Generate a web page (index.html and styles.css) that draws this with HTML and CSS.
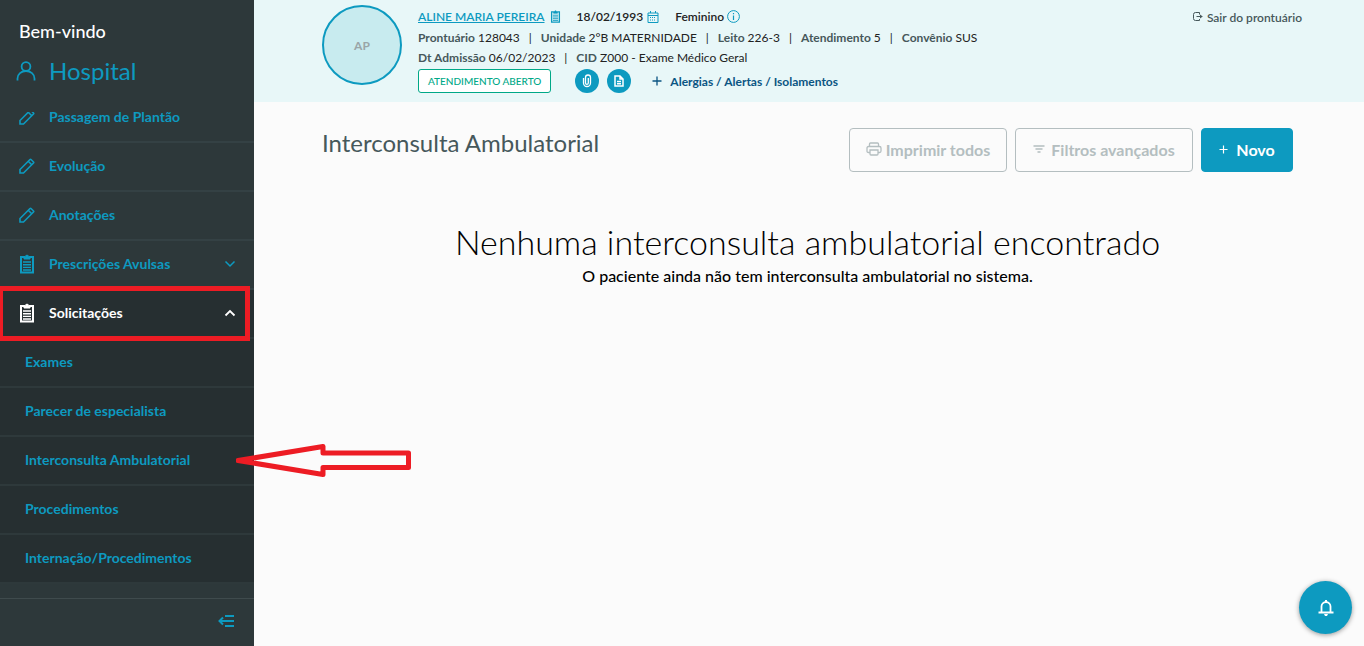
FILE: index.html
```html
<!DOCTYPE html>
<html lang="pt-BR">
<head>
    <meta charset="UTF-8">
    <meta name="viewport" content="width=device-width, initial-scale=1.0">
    <title>Interconsulta Ambulatorial</title>
    <link rel="stylesheet" href="styles.css">
</head>
<body>
    <svg class="sprite" width="0" height="0">
        <symbol id="pencil" viewBox="0 0 16 16">
            <path d="M1 15v-3.500L11 1.500q0.500-0.500 1 0L14.500 4q0.500 0.500 0 1L4.500 15zM9.500 3.500l3 3" fill="none" stroke="currentColor" stroke-width="1.600"/>
        </symbol>
        <symbol id="clipboard" viewBox="0 0 16 20">
            <path d="M5 3H2V18.500H14V3H11" fill="none" stroke="currentColor" stroke-width="2"/>
            <path d="M5 5V2.500H6.200a1.900 1.900 0 0 1 3.600 0H11V5z" fill="currentColor" stroke="currentColor"/>
            <path d="M4 8h8M4 10.700h8M4 13.400h8M4 16h8" stroke="currentColor" stroke-width="1.400"/>
        </symbol>
        <symbol id="plus" viewBox="0 0 10 10">
            <path d="M5 0.500v9M0.500 5h9" stroke="currentColor" stroke-width="1.300"/>
        </symbol>
    </svg>

    <div class="app">
        <aside class="sidebar">
            <div class="welcome">
                <p class="hello">Bem-vindo</p>
                <p class="user">
                    <svg width="20" height="20" viewBox="0 0 20 20"><path d="M1.500 19.500v-2a8.500 7.500 0 0 1 17 0v2" fill="none" stroke="currentColor" stroke-width="1.800"/><circle cx="10" cy="5.500" r="4.400" fill="none" stroke="currentColor" stroke-width="1.800"/></svg>
                    Hospital
                </p>
            </div>
            <nav class="menu">
                <ul>
                    <li><a href="#"><svg class="icon" width="16" height="16"><use href="#pencil"/></svg>Passagem de Plantão</a></li>
                    <li><a href="#"><svg class="icon" width="16" height="16"><use href="#pencil"/></svg>Evolução</a></li>
                    <li><a href="#"><svg class="icon" width="16" height="16"><use href="#pencil"/></svg>Anotações</a></li>
                    <li><a href="#"><svg class="icon" width="16" height="20"><use href="#clipboard"/></svg>Prescrições Avulsas<svg class="arrow" width="12" height="8" viewBox="0 0 12 8"><path d="M1.500 1.500L6 6L10.500 1.500" fill="none" stroke="currentColor" stroke-width="1.500"/></svg></a></li>
                    <li class="open">
                        <a href="#"><svg class="icon" width="16" height="20"><use href="#clipboard"/></svg>Solicitações<svg class="arrow" width="12" height="8" viewBox="0 0 12 8"><path d="M1.500 6.500L6 2L10.500 6.500" fill="none" stroke="currentColor" stroke-width="1.800"/></svg></a>
                        <span class="mark-box"></span>
                    </li>
                    <li class="sub"><a href="#">Exames</a></li>
                    <li class="sub"><a href="#">Parecer de especialista</a></li>
                    <li class="sub"><a href="#">Interconsulta Ambulatorial</a></li>
                    <li class="sub"><a href="#">Procedimentos</a></li>
                    <li class="sub"><a href="#">Internação/Procedimentos</a></li>
                </ul>
            </nav>
            <div class="sidebar-footer">
                <button class="collapse" aria-label="Recolher menu">
                    <svg width="16" height="12" viewBox="0 0 16 12"><path d="M7 1h9M1 6h15M7 11h9M5 2.500L1.500 6L5 9.500" fill="none" stroke="currentColor" stroke-width="2"/></svg>
                </button>
            </div>
        </aside>

        <main class="content">
            <header class="patient">
                <div class="avatar">AP</div>
                <div class="info">
                    <div class="line first">
                        <a href="#" class="name">ALINE MARIA PEREIRA</a>
                        <svg class="blue" width="11" height="13" viewBox="0 0 16 20"><use href="#clipboard"/></svg>
                        <span class="birth">18/02/1993</span>
                        <svg class="blue" width="12" height="12" viewBox="0 0 12 12"><path d="M1 2h10v9.500H1zM1 4.500h10M3.500 0v2M8.500 0v2" fill="none" stroke="currentColor"/><path d="M3 6.500h6M3 9h6" stroke="currentColor" stroke-dasharray="1 1"/></svg>
                        <span class="gender">Feminino</span>
                        <svg class="blue info-icon" width="13" height="13" viewBox="0 0 13 13"><circle cx="6.500" cy="6.500" r="5.900" fill="none" stroke="currentColor"/><path d="M6.500 5.500v4.500M6.500 3v1.200" stroke="currentColor" stroke-width="1.200"/></svg>
                    </div>
                    <div class="line">
                        <span><b>Prontuário</b> 128043</span><i>|</i>
                        <span><b>Unidade</b> 2°B MATERNIDADE</span><i>|</i>
                        <span><b>Leito</b> 226-3</span><i>|</i>
                        <span><b>Atendimento</b> 5</span><i>|</i>
                        <span><b>Convênio</b> SUS</span>
                    </div>
                    <div class="line">
                        <span><b>Dt Admissão</b> 06/02/2023</span><i>|</i>
                        <span><b>CID</b> Z000 - Exame Médico Geral</span>
                    </div>
                    <div class="actions">
                        <span class="status">ATENDIMENTO ABERTO</span>
                        <button class="round" aria-label="Anexos">
                            <svg width="10" height="14" viewBox="0 0 10 14"><path d="M1.500 4v5a3.500 3.500 0 0 0 7 0V3.500a2.500 2.500 0 0 0-5 0V9a1.400 1.400 0 0 0 2.800 0V4" fill="none" stroke="currentColor" stroke-width="1.300"/></svg>
                        </button>
                        <button class="round" aria-label="Documentos">
                            <svg width="10" height="12" viewBox="0 0 10 12"><path d="M1 1h5l3 3v7H1zM6 1v3h3M3 6.500h4M3 8.700h4" fill="none" stroke="currentColor" stroke-width="1.500"/></svg>
                        </button>
                        <button class="alerts"><svg width="10" height="10"><use href="#plus"/></svg>Alergias / Alertas / Isolamentos</button>
                    </div>
                </div>
                <a href="#" class="exit">
                    <svg width="10" height="10" viewBox="0 0 10 10"><path d="M6.500 2.500V0.500H2.500Q0.500 0.500 0.500 2.500v4q0 2 2 2h4V7M3.500 4.500h5" fill="none" stroke="currentColor"/><path d="M7 2.500L9.800 4.500L7 6.500z" fill="currentColor"/></svg>
                    Sair do prontuário
                </a>
            </header>

            <section class="toolbar">
                <h1>Interconsulta Ambulatorial</h1>
                <button class="btn" disabled>
                    <svg width="16" height="14" viewBox="0 0 16 14"><path d="M3.500 4V2q0-1 1-1h7q1 0 1 1v2M3.500 10.500H2.500q-1.500 0-1.500-1.500V6q0-1.500 1.500-1.500h11Q15 4.500 15 6v3q0 1.500-1.500 1.500h-1M4 8h8v4q0 1-1 1H5q-1 0-1-1z" fill="none" stroke="currentColor" stroke-width="1.300"/></svg>
                    Imprimir todos
                </button>
                <button class="btn filter" disabled>
                    <svg width="12" height="8" viewBox="0 0 12 8"><path d="M0.500 1h11M2.500 4h7M4.500 7h3" stroke="currentColor" stroke-width="1.400"/></svg>
                    Filtros avançados
                </button>
                <button class="btn primary"><svg width="9" height="9" viewBox="0 0 10 10"><use href="#plus"/></svg>Novo</button>
            </section>

            <section class="empty">
                <h2>Nenhuma interconsulta ambulatorial encontrado</h2>
                <p>O paciente ainda não tem interconsulta ambulatorial no sistema.</p>
            </section>
        </main>

        <svg class="mark-arrow" width="175" height="36" viewBox="0 0 175 36"><path d="M2 17.500L87 3.500V10H172.500V24.500H87V31.500Z" fill="none" stroke="#ed1c24" stroke-width="5" stroke-linejoin="round"/></svg>

        <button class="bell" aria-label="Notificações">
            <svg width="16" height="18" viewBox="0 0 16 18"><path d="M3.500 13V7.500a4.500 4.500 0 0 1 9 0V13M0.500 13.500h15" fill="none" stroke="currentColor" stroke-width="1.800"/><path d="M7 1h2v2H7zM6 15h4l-1 2H7z" fill="currentColor"/></svg>
        </button>
    </div>
</body>
</html>
```
FILE: styles.css
```css
* {
    box-sizing: border-box;
}

body {
    margin: 0;
    background-color: #fbfbfb;
    font-family: Lato, "Open Sans", sans-serif;
    font-size: 12px;
    color: #222;
}

h1, h2, p, ul {
    margin: 0;
    padding: 0;
}

a {
    color: inherit;
    text-decoration: none;
}

button {
    font-family: inherit;
    cursor: pointer;
}

.sprite {
    position: absolute;
}

.app {
    position: relative;
    display: flex;
    height: 100vh;
    overflow: hidden;
}

/* sidebar */
.sidebar {
    flex: 0 0 254px;
    display: flex;
    flex-direction: column;
    background-color: #2d383a;
    color: #0d9ac0;
}

.welcome {
    height: 112px;
    flex: none;
    padding: 19px 16px 0;
}

.hello {
    padding-left: 3px;
    font-size: 18px;
    line-height: 24px;
    font-weight: 500;
    color: #fff;
}

.user {
    display: flex;
    align-items: center;
    gap: 13px;
    margin-top: 12px;
    font-size: 24px;
    line-height: 32px;
}

.menu {
    flex: 1;
    min-height: 0;
    display: flex;
    flex-direction: column;
    justify-content: flex-end;
    padding-bottom: 14px;
    overflow: hidden;
}

.menu ul {
    flex: none;
    list-style: none;
}

.menu li {
    border-bottom: 2px solid #344144;
}

.menu li a {
    display: flex;
    align-items: center;
    height: 47px;
    padding: 0 18px 2px 19px;
    font-size: 14px;
    font-weight: bold;
}

.menu .icon {
    margin-right: 14px;
}

.menu .arrow {
    margin-left: auto;
}

.menu .open,
.menu .sub {
    background-color: #262f31;
    border-color: #2e393b;
}

.menu .open {
    position: relative;
    color: #fff;
}

.menu .sub a {
    padding-left: 25px;
}

.sidebar-footer {
    display: flex;
    flex: none;
    justify-content: flex-end;
    height: 48px;
    padding: 0 20px 2px 0;
    border-top: 1px solid #3f4b4d;
}

.collapse {
    padding: 0;
    border: none;
    background: none;
    color: #0d9ac0;
}

/* patient header */
.content {
    flex: 1;
    min-width: 0;
}

.patient {
    display: flex;
    gap: 16px;
    height: 102px;
    padding: 5px 62px 0 68px;
    background-color: #e8f7f8;
}

.avatar {
    display: flex;
    align-items: center;
    justify-content: center;
    flex: none;
    width: 80px;
    height: 80px;
    border: 2px solid #0d9ac0;
    border-radius: 50%;
    background-color: #c8ebef;
    color: #9aa5a7;
    font-weight: bold;
}

.info {
    flex: 1;
    padding-top: 1px;
}

.line {
    display: flex;
    align-items: center;
    height: 20px;
    white-space: nowrap;
}

.line b {
    color: #46585b;
}

.line i {
    width: 21px;
    text-align: center;
    font-style: normal;
}

.first {
    height: 21px;
    font-weight: 600;
}

.name {
    margin-right: 5px;
    color: #0d9ac0;
    text-decoration: underline;
}

.blue {
    color: #0d9ac0;
}

.birth {
    margin: 0 4px 0 16px;
}

.gender {
    margin: 0 3px 0 16px;
}

.actions {
    display: flex;
    align-items: center;
    gap: 8px;
    margin-top: 2px;
}

.status {
    height: 24px;
    margin-right: 16px;
    padding: 0 9px;
    border: 1px solid #00a887;
    border-radius: 3px;
    background-color: #fff;
    color: #00a887;
    font-size: 10px;
    font-weight: 500;
    line-height: 22px;
}

.round {
    display: flex;
    align-items: center;
    justify-content: center;
    width: 24px;
    height: 24px;
    padding: 0;
    border: none;
    border-radius: 50%;
    background-color: #0d9ac0;
    color: #fff;
}

.alerts {
    display: flex;
    align-items: center;
    gap: 8px;
    margin-left: 13px;
    padding: 0;
    border: none;
    background: none;
    color: #0b5583;
    font-size: 12px;
    font-weight: bold;
}

.exit {
    display: flex;
    align-items: center;
    gap: 4px;
    height: 24px;
    color: #46585b;
    font-weight: 600;
}

/* page */
.toolbar {
    display: flex;
    gap: 8px;
    padding: 26px 71px 0 68px;
}

.toolbar h1 {
    flex: 1;
    color: #46585b;
    font-size: 24px;
    font-weight: 400;
    line-height: 30px;
}

.btn {
    display: flex;
    align-items: center;
    justify-content: center;
    gap: 4px;
    width: 158px;
    height: 44px;
    padding: 0 0 2px;
    border: 1px solid #b4bec0;
    border-radius: 4px;
    background-color: transparent;
    color: #b4bec0;
    font-size: 16px;
    font-weight: bold;
}

.filter {
    gap: 6px;
    width: 178px;
}

.primary {
    gap: 8px;
    width: 92px;
    border-color: #0d9ac0;
    background-color: #0d9ac0;
    color: #fff;
}

.empty {
    padding: 49px 71px 0 68px;
    text-align: center;
    color: #000;
}

.empty h2 {
    font-size: 34px;
    font-weight: 300;
    line-height: 42px;
}

.empty p {
    font-size: 16px;
    font-weight: 500;
    line-height: 26px;
}

.bell {
    position: absolute;
    right: 12px;
    bottom: 12px;
    display: flex;
    align-items: center;
    justify-content: center;
    width: 53px;
    height: 53px;
    border: none;
    border-radius: 50%;
    background-color: #0d9ac0;
    color: #fff;
    box-shadow: 0 1px 5px rgba(0, 0, 0, 0.4);
}

/* red marks */
.mark-box {
    position: absolute;
    top: -4px;
    left: -2px;
    width: 252px;
    height: 55px;
    border: 5px solid #ed1c24;
}

.mark-arrow {
    position: absolute;
    left: 236px;
    bottom: 167px;
}
```
